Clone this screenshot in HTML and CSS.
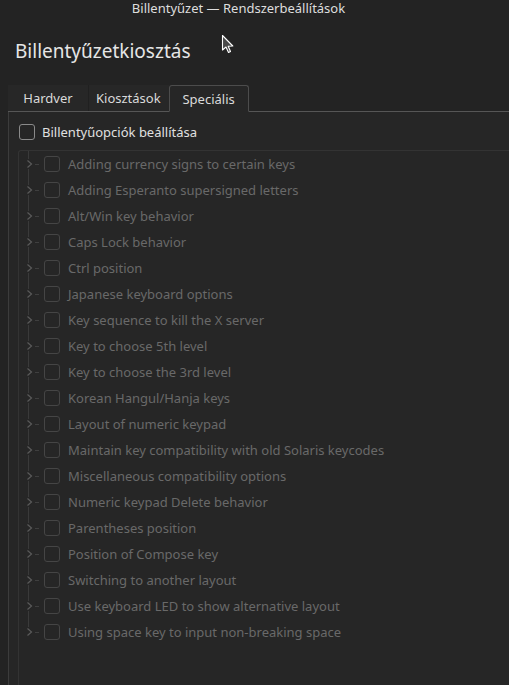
FILE: index.html
```html
<!DOCTYPE html>
<html lang="hu">
<head>
<meta charset="utf-8">
<link rel="stylesheet" href="styles.css">
</head>
<body>
<div class="window">
  <div class="titlebar">Billentyűzet — Rendszerbeállítások</div>
  <h1 class="heading">Billentyűzetkiosztás</h1>
  <div class="tabbar">
    <div class="tab">Hardver</div>
    <div class="tab">Kiosztások</div>
    <div class="tab active">Speciális</div>
    <div class="tab-rest"></div>
  </div>
  <div class="panel">
    <label class="master"><span class="box"></span><span>Billentyűopciók beállítása</span></label>
    <div class="tree">
      <div class="rows">
        <div class="row"><span class="branch"><svg width="8" height="10" viewBox="0 0 8 10"><path d="M1.5 1.5 L5.5 5 L1.5 8.5" fill="none" stroke="#5a5a5a" stroke-width="1.2"/></svg></span><span class="dash"></span><span class="box dim"></span><span class="label">Adding currency signs to certain keys</span></div>
        <div class="row"><span class="branch"><svg width="8" height="10" viewBox="0 0 8 10"><path d="M1.5 1.5 L5.5 5 L1.5 8.5" fill="none" stroke="#5a5a5a" stroke-width="1.2"/></svg></span><span class="dash"></span><span class="box dim"></span><span class="label">Adding Esperanto supersigned letters</span></div>
        <div class="row"><span class="branch"><svg width="8" height="10" viewBox="0 0 8 10"><path d="M1.5 1.5 L5.5 5 L1.5 8.5" fill="none" stroke="#5a5a5a" stroke-width="1.2"/></svg></span><span class="dash"></span><span class="box dim"></span><span class="label">Alt/Win key behavior</span></div>
        <div class="row"><span class="branch"><svg width="8" height="10" viewBox="0 0 8 10"><path d="M1.5 1.5 L5.5 5 L1.5 8.5" fill="none" stroke="#5a5a5a" stroke-width="1.2"/></svg></span><span class="dash"></span><span class="box dim"></span><span class="label">Caps Lock behavior</span></div>
        <div class="row"><span class="branch"><svg width="8" height="10" viewBox="0 0 8 10"><path d="M1.5 1.5 L5.5 5 L1.5 8.5" fill="none" stroke="#5a5a5a" stroke-width="1.2"/></svg></span><span class="dash"></span><span class="box dim"></span><span class="label">Ctrl position</span></div>
        <div class="row"><span class="branch"><svg width="8" height="10" viewBox="0 0 8 10"><path d="M1.5 1.5 L5.5 5 L1.5 8.5" fill="none" stroke="#5a5a5a" stroke-width="1.2"/></svg></span><span class="dash"></span><span class="box dim"></span><span class="label">Japanese keyboard options</span></div>
        <div class="row"><span class="branch"><svg width="8" height="10" viewBox="0 0 8 10"><path d="M1.5 1.5 L5.5 5 L1.5 8.5" fill="none" stroke="#5a5a5a" stroke-width="1.2"/></svg></span><span class="dash"></span><span class="box dim"></span><span class="label">Key sequence to kill the X server</span></div>
        <div class="row"><span class="branch"><svg width="8" height="10" viewBox="0 0 8 10"><path d="M1.5 1.5 L5.5 5 L1.5 8.5" fill="none" stroke="#5a5a5a" stroke-width="1.2"/></svg></span><span class="dash"></span><span class="box dim"></span><span class="label">Key to choose 5th level</span></div>
        <div class="row"><span class="branch"><svg width="8" height="10" viewBox="0 0 8 10"><path d="M1.5 1.5 L5.5 5 L1.5 8.5" fill="none" stroke="#5a5a5a" stroke-width="1.2"/></svg></span><span class="dash"></span><span class="box dim"></span><span class="label">Key to choose the 3rd level</span></div>
        <div class="row"><span class="branch"><svg width="8" height="10" viewBox="0 0 8 10"><path d="M1.5 1.5 L5.5 5 L1.5 8.5" fill="none" stroke="#5a5a5a" stroke-width="1.2"/></svg></span><span class="dash"></span><span class="box dim"></span><span class="label">Korean Hangul/Hanja keys</span></div>
        <div class="row"><span class="branch"><svg width="8" height="10" viewBox="0 0 8 10"><path d="M1.5 1.5 L5.5 5 L1.5 8.5" fill="none" stroke="#5a5a5a" stroke-width="1.2"/></svg></span><span class="dash"></span><span class="box dim"></span><span class="label">Layout of numeric keypad</span></div>
        <div class="row"><span class="branch"><svg width="8" height="10" viewBox="0 0 8 10"><path d="M1.5 1.5 L5.5 5 L1.5 8.5" fill="none" stroke="#5a5a5a" stroke-width="1.2"/></svg></span><span class="dash"></span><span class="box dim"></span><span class="label">Maintain key compatibility with old Solaris keycodes</span></div>
        <div class="row"><span class="branch"><svg width="8" height="10" viewBox="0 0 8 10"><path d="M1.5 1.5 L5.5 5 L1.5 8.5" fill="none" stroke="#5a5a5a" stroke-width="1.2"/></svg></span><span class="dash"></span><span class="box dim"></span><span class="label">Miscellaneous compatibility options</span></div>
        <div class="row"><span class="branch"><svg width="8" height="10" viewBox="0 0 8 10"><path d="M1.5 1.5 L5.5 5 L1.5 8.5" fill="none" stroke="#5a5a5a" stroke-width="1.2"/></svg></span><span class="dash"></span><span class="box dim"></span><span class="label">Numeric keypad Delete behavior</span></div>
        <div class="row"><span class="branch"><svg width="8" height="10" viewBox="0 0 8 10"><path d="M1.5 1.5 L5.5 5 L1.5 8.5" fill="none" stroke="#5a5a5a" stroke-width="1.2"/></svg></span><span class="dash"></span><span class="box dim"></span><span class="label">Parentheses position</span></div>
        <div class="row"><span class="branch"><svg width="8" height="10" viewBox="0 0 8 10"><path d="M1.5 1.5 L5.5 5 L1.5 8.5" fill="none" stroke="#5a5a5a" stroke-width="1.2"/></svg></span><span class="dash"></span><span class="box dim"></span><span class="label">Position of Compose key</span></div>
        <div class="row"><span class="branch"><svg width="8" height="10" viewBox="0 0 8 10"><path d="M1.5 1.5 L5.5 5 L1.5 8.5" fill="none" stroke="#5a5a5a" stroke-width="1.2"/></svg></span><span class="dash"></span><span class="box dim"></span><span class="label">Switching to another layout</span></div>
        <div class="row"><span class="branch"><svg width="8" height="10" viewBox="0 0 8 10"><path d="M1.5 1.5 L5.5 5 L1.5 8.5" fill="none" stroke="#5a5a5a" stroke-width="1.2"/></svg></span><span class="dash"></span><span class="box dim"></span><span class="label">Use keyboard LED to show alternative layout</span></div>
        <div class="row last"><span class="branch"><svg width="8" height="10" viewBox="0 0 8 10"><path d="M1.5 1.5 L5.5 5 L1.5 8.5" fill="none" stroke="#5a5a5a" stroke-width="1.2"/></svg></span><span class="dash"></span><span class="box dim"></span><span class="label">Using space key to input non-breaking space</span></div>
      </div>
    </div>
  </div>
  <svg class="cursor" width="14" height="22" viewBox="0 0 14 22"><path d="M1.5 1.5 L1.5 16 L5 13 L7.5 18.5 L9.5 17.5 L7.2 12.2 L11.8 12 Z" fill="#4a4a4a" stroke="#ffffff" stroke-width="1.1" stroke-linejoin="round"/></svg>
</div>
</body>
</html>
```
FILE: styles.css
```css
html, body {
  margin: 0;
  padding: 0;
  background: #232323;
}
body {
  font-family: "Noto Sans", "DejaVu Sans", sans-serif;
  color: #dcdcdc;
  font-size: 13px;
}
.window {
  position: relative;
  width: 509px;
  height: 685px;
  overflow: hidden;
  display: flex;
  flex-direction: column;
}
.titlebar {
  height: 17px;
  line-height: 17px;
  text-align: center;
  font-size: 13px;
  color: #dedede;
  padding-right: 32px;
}
.heading {
  margin: 21px 0 0 15px;
  font-size: 19px;
  font-weight: normal;
  line-height: 26px;
  color: #e6e6e6;
  height: 26px;
}
.tabbar {
  display: flex;
  margin: 21px 0 0 8px;
  height: 27px;
  align-items: stretch;
}
.tab {
  min-width: 80px;
  padding: 0 8px;
  text-align: center;
  line-height: 26px;
  background: #272727;
  color: #dadada;
  border-bottom: 1px solid #565656;
  box-sizing: border-box;
  height: 27px;
}
.tab + .tab {
  box-shadow: inset 1px 0 0 #202020;
}
.tab.active {
  background: #262626;
  border: 1px solid #4c4c4c;
  border-bottom: 1px solid #262626;
  border-radius: 3px 3px 0 0;
  box-shadow: none;
}
.tab-rest {
  flex: 1;
  border-bottom: 1px solid #565656;
  height: 27px;
  box-sizing: border-box;
}
.panel {
  flex: 1;
  margin-left: 8px;
  border-left: 1px solid #3c3c3c;
  background: #262626;
  display: flex;
  flex-direction: column;
}
.master {
  display: flex;
  align-items: center;
  gap: 7px;
  padding: 11px 0 0 10px;
  height: 17px;
  color: #e0e0e0;
}
.box {
  width: 14px;
  height: 14px;
  border: 1px solid #8a8a8a;
  border-radius: 3px;
  box-sizing: content-box;
  display: inline-block;
  flex: none;
}
.tree {
  flex: 1;
  margin: 10px 0 0 9px;
  border-top: 1px solid #333333;
  border-left: 1px solid #333333;
  border-top-left-radius: 3px;
}
.rows {
  position: relative;
}
.row {
  position: relative;
  display: flex;
  align-items: center;
  height: 26px;
}
.row::before {
  content: "";
  position: absolute;
  left: 9px;
  top: 0;
  bottom: 0;
  border-left: 1px solid #3a3a3a;
}
.row.last::before {
  bottom: 13px;
}
.branch {
  position: relative;
  z-index: 1;
  width: 8px;
  margin-left: 7px;
  display: flex;
  align-items: center;
  background: #262626;
  height: 10px;
}
.dash {
  width: 4px;
  margin: 0 5px 0 1px;
  border-top: 1px solid #3f3f3f;
}
.box.dim {
  border-color: #454545;
}
.label {
  margin-left: 8px;
  color: #696969;
  white-space: nowrap;
}
.cursor {
  position: absolute;
  left: 221px;
  top: 34px;
}
```
